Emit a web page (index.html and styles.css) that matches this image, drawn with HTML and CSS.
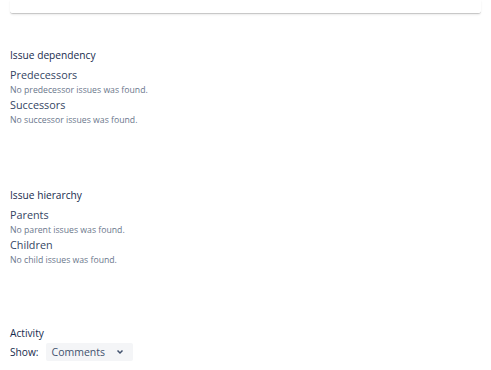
FILE: index.html
```html
<!DOCTYPE html>
<html lang="en">
<head>
    <meta charset="UTF-8">
    <title>Issue details</title>
    <link rel="stylesheet" href="styles.css">
</head>
<body>
    <div class="card-edge"></div>

    <div class="section first">
        <div class="section-title">Issue dependency</div>
        <div class="label">Predecessors</div>
        <div class="empty">No predecessor issues was found.</div>
        <div class="label">Successors</div>
        <div class="empty">No successor issues was found.</div>
    </div>

    <div class="section">
        <div class="section-title">Issue hierarchy</div>
        <div class="label">Parents</div>
        <div class="empty">No parent issues was found.</div>
        <div class="label">Children</div>
        <div class="empty">No child issues was found.</div>
    </div>

    <div class="section activity">
        <div class="section-title">Activity</div>
        <div class="show-row">
            <span class="show-label">Show:</span>
            <div class="select">
                <span>Comments</span>
                <svg width="8" height="6" viewBox="0 0 8 6"><path d="M1.5 1.5 L4 4 L6.5 1.5" fill="none" stroke="#42526e" stroke-width="1.5"/></svg>
            </div>
        </div>
    </div>
</body>
</html>
```

FILE: styles.css
```css
body {
    margin: 0;
    padding: 0;
    background-color: #fff;
    color: #172b4d;
    font-family: "Open Sans", "Noto Sans", Arial, sans-serif;
}
.card-edge {
    height: 13px;
    margin: 0 10px;
    border-bottom: 1px solid #c8c8c8;
    border-radius: 0 0 3px 3px;
    box-shadow: 0 1px 2px rgba(0, 0, 0, 0.08);
}
.section {
    padding: 0 10px;
    margin-top: 61px;
}
.section.first {
    margin-top: 34px;
}
.section.activity {
    margin-top: 59px;
}
.section-title {
    font-size: 10.2px;
    line-height: 15px;
    margin-bottom: 4px;
}
.activity .section-title {
    margin-bottom: 2px;
}
.label {
    font-size: 10.8px;
    line-height: 15px;
    color: #344563;
}
.empty {
    font-size: 8.7px;
    line-height: 15px;
    padding-top: 1px;
    margin-bottom: -1px;
    color: #6b778c;
}
.show-row {
    display: flex;
    align-items: center;
    gap: 7px;
    font-size: 10.2px;
}
.show-label {
    line-height: 15px;
}
.select {
    display: flex;
    align-items: center;
    gap: 11px;
    height: 18px;
    padding: 0 9px 0 6px;
    background-color: #f4f5f7;
    border-radius: 2px;
    color: #42526e;
    font-size: 10.5px;
}
```
